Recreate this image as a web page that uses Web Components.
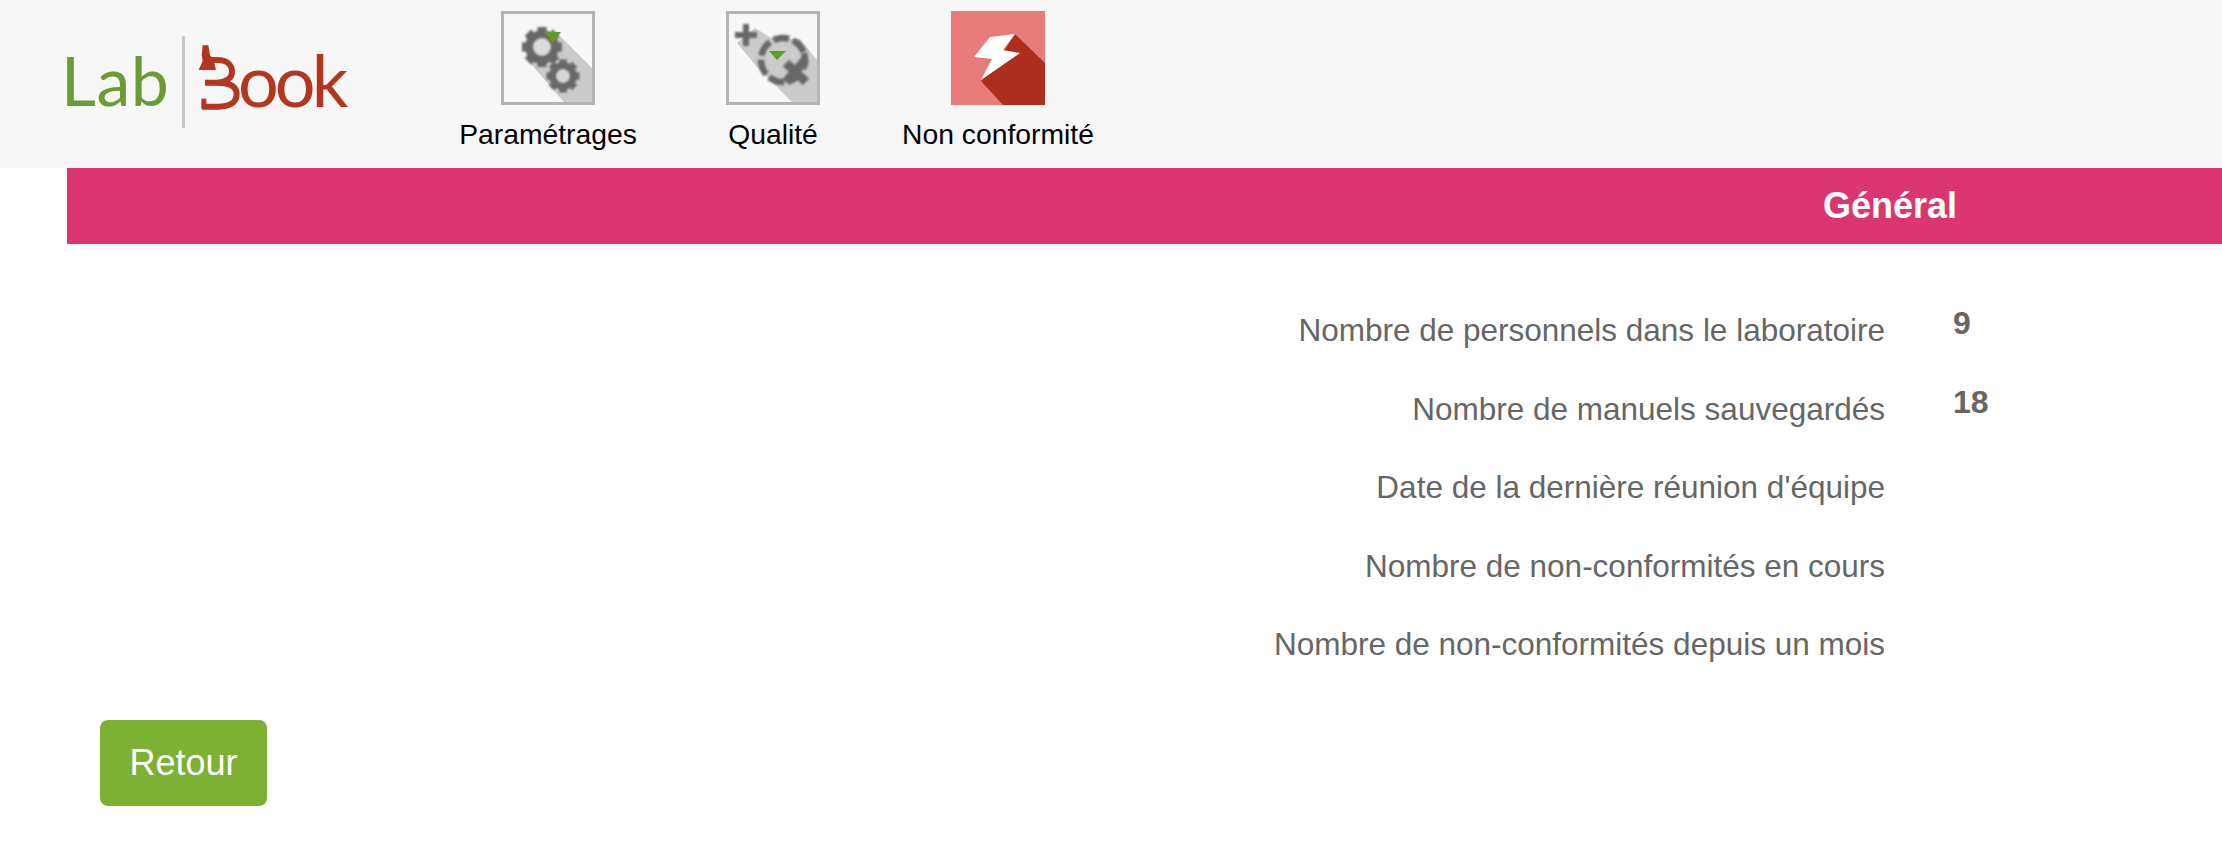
<!DOCTYPE html>
<html lang="fr"><head><meta charset="utf-8"><title>LabBook</title>
<style>html,body{margin:0;background:#fff;font-family:"Liberation Sans",Arial,sans-serif}</style></head>
<body>
<lab-header></lab-header>
<lab-band>Général</lab-band>
<lab-stats>
  <lab-stat label="Nombre de personnels dans le laboratoire" value="9"></lab-stat>
  <lab-stat label="Nombre de manuels sauvegardés" value="18"></lab-stat>
  <lab-stat label="Date de la dernière réunion d'équipe"></lab-stat>
  <lab-stat label="Nombre de non-conformités en cours"></lab-stat>
  <lab-stat label="Nombre de non-conformités depuis un mois"></lab-stat>
</lab-stats>
<lab-button>Retour</lab-button>
<script>
function def(name, html, setup){
  customElements.define(name, class extends HTMLElement{
    constructor(){super();this.attachShadow({mode:'open'}).innerHTML=html;}
    connectedCallback(){ if(setup) setup(this); }
  });
}
const gear=(cx,cy,r,hole,teeth)=>{
  let s='';
  for(let i=0;i<teeth;i++){const a=i*360/teeth;s+=`<rect x="${cx-r*0.23}" y="${cy-r}" width="${r*0.46}" height="${r*0.5}" fill="#686868" transform="rotate(${a} ${cx} ${cy})"/>`;}
  const rm=(r*0.84+hole)/2;
  return s+`<circle cx="${cx}" cy="${cy}" r="${rm}" fill="none" stroke="#686868" stroke-width="${r*0.84-hole}"/>`;
};
const ICONS={
 gears:`<svg viewBox="0 0 94 94" width="94" height="94"><defs><filter id="b" x="-10%" y="-10%" width="120%" height="120%"><feGaussianBlur stdDeviation=".8"/></filter></defs>
  <rect x="1.5" y="1.5" width="91" height="91" fill="#f7f7f7" stroke="#b4b4b4" stroke-width="3"/>
  <polygon points="56,22 91,57 91,91 63,91 29,52" fill="#cbcbcb"/>
  <circle cx="41" cy="36" r="9.5" fill="#dcdcdc"/><circle cx="62" cy="65" r="7.5" fill="#d6d6d6"/>
  <g filter="url(#b)">${gear(41,36,20,9,8)}${gear(62,65,16.5,7,8)}</g>
  <polygon points="43,21 60,21 52,31" fill="#5f9e25"/></svg>`,
 quality:`<svg viewBox="0 0 94 94" width="94" height="94"><defs><filter id="b" x="-10%" y="-10%" width="120%" height="120%"><feGaussianBlur stdDeviation=".8"/></filter></defs>
  <rect x="1.5" y="1.5" width="91" height="91" fill="#f7f7f7" stroke="#b4b4b4" stroke-width="3"/>
  <polygon points="29,17 47,28 74,28 91,49 91,91 66,91 31,56 11,32" fill="#cbcbcb"/>
  <g filter="url(#b)" fill="none" stroke="#686868">
   <path d="M9 24H31M20 13V35" stroke-width="6"/>
   <circle cx="57" cy="49" r="22" stroke-width="6.5" stroke-dasharray="16 4" transform="rotate(-18 57 49)"/>
   <path d="M60 52L80 71M80 48L60 71" stroke-width="9"/></g>
  <polygon points="43,40 60,40 51,49" fill="#5f9e25"/></svg>`,
 bolt:`<svg viewBox="0 0 94 94" width="94" height="94"><rect width="94" height="94" fill="#e87c7a"/>
  <polygon points="64,23 94,52 94,94 52,94 30,70 45,52" fill="#ab2f1c"/>
  <polygon points="39,26 64,23 52,39 69,42 30,69 41,48 23,46" fill="#fff"/></svg>`
};
def('lab-logo',`<style>
 :host{display:flex;align-items:flex-start;width:368.5px;height:100%;box-sizing:border-box;padding-top:36px;color:#6a9c33;font:400 68px/1 Lato,sans-serif}
 .lab{width:121px;margin-left:-6px;height:92px;line-height:88px;letter-spacing:.5px;box-sizing:border-box}
 .sep{width:3px;height:92px;background:#c8c8c8;flex:none}
 .book{display:flex;height:92px;color:#b5361f;margin-left:13px}
 svg{display:block;flex:none;margin:4px -5px 0 0;filter:blur(.5px)}
 .ook{font-size:72px;line-height:87px;letter-spacing:-4px}
</style><span class="lab">Lab</span><span class="sep"></span><span class="book"><svg width="45" height="80" viewBox="474 60 135 240" aria-hidden="true"><g fill="none" stroke="#b5361f" stroke-width="18"><path d="M512 120H532C562 120 576 136 576 155C576 176 555 188 530 188H495M530 188C568 188 590 197 590 222C590 248 568 260 535 260H486"/></g><polygon points="488,76 505,76 510,105 520,118 528,150 476,150 488,122 485,105" fill="#b5361f"/><rect x="484" y="236" width="15" height="30" fill="#b5361f"/></svg><span class="ook">ook</span></span>`);
def('lab-nav-item',`<style>
 :host{display:flex;flex-direction:column;align-items:center;width:225px;color:#000;font-size:28.3px;line-height:32px}
 .i{width:94px;height:94px;margin-bottom:13px}
 svg{display:block}
</style><div class="i"></div><slot></slot>`,el=>{el.shadowRoot.querySelector('.i').innerHTML=ICONS[el.getAttribute('icon')];});
def('lab-header',`<style>
 :host{display:flex;height:168px;box-sizing:border-box;padding:11px 0 0 67px;background:#f7f7f7;position:relative}
 lab-logo{margin-top:-11px}
</style><lab-logo></lab-logo><lab-nav-item icon="gears">Paramétrages</lab-nav-item><lab-nav-item icon="quality">Qualité</lab-nav-item><lab-nav-item icon="bolt">Non conformité</lab-nav-item>`);
def('lab-band',`<style>
 :host{display:flex;justify-content:flex-end;align-items:center;height:76px;margin-left:67px;padding-right:265px;background:#db3671;color:#fff;font-weight:700;font-size:36px}
</style><slot></slot>`);
def('lab-stats',`<style>:host{display:flex;flex-direction:column;padding-top:60px;margin-bottom:23px}</style><slot></slot>`);
def('lab-stat',`<style>
 :host{display:grid;grid-template-columns:1885px 1fr;column-gap:68px;height:78.5px;color:#666;font-size:31.5px;line-height:38px}
 .l{text-align:right;padding-top:7px}
 .v{font-weight:700;font-size:32px;line-height:38px}
</style><div class="l"></div><div class="v"></div>`,el=>{
 el.shadowRoot.querySelector('.l').textContent=el.getAttribute('label');
 el.shadowRoot.querySelector('.v').textContent=el.getAttribute('value')||'';
});
def('lab-button',`<style>
 :host{display:flex;align-items:center;justify-content:center;width:167px;height:86px;margin-left:100px;background:#7cb133;border-radius:8px;color:#fff;font-size:36px}
</style><slot></slot>`);
</script>
</body></html>
